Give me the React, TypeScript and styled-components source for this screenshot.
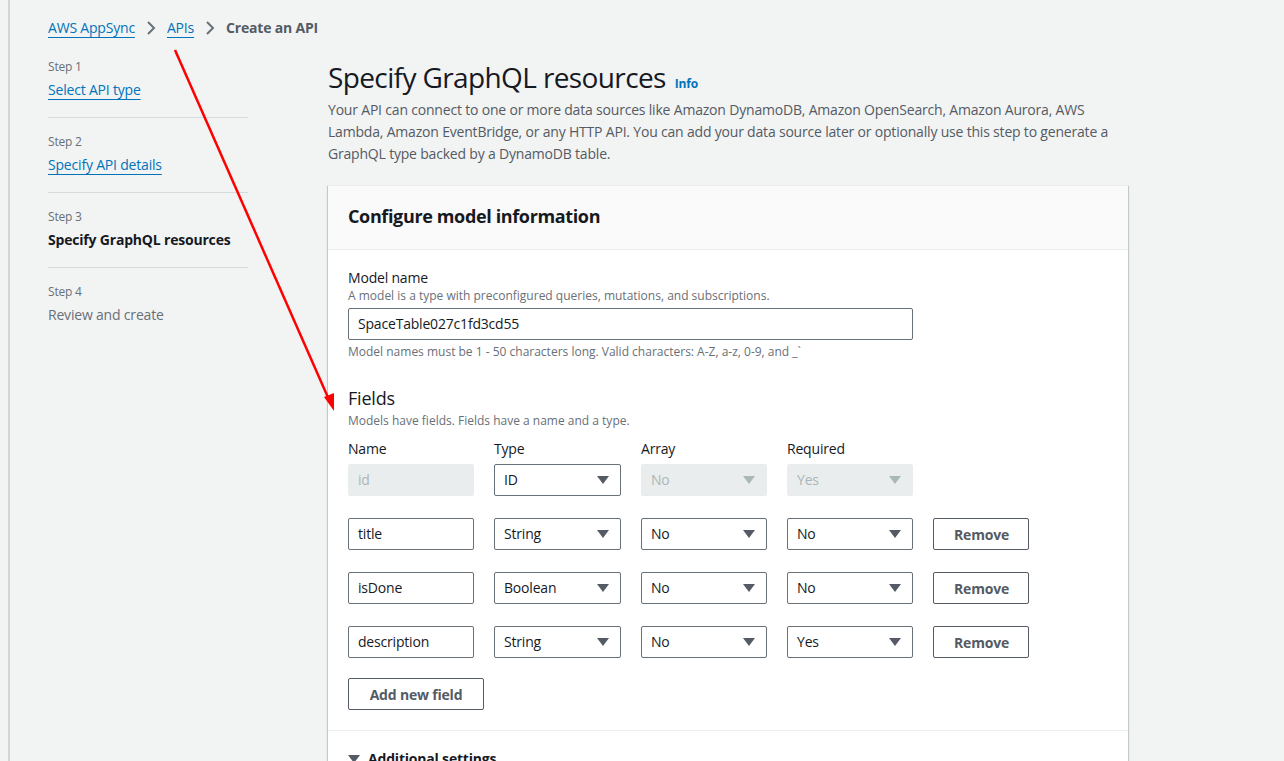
import React from "react";
import styled, { createGlobalStyle } from "styled-components";

const GlobalStyle = createGlobalStyle`
  html, body {
    margin: 0;
    padding: 0;
    background: #f2f3f3;
    font-family: "Open Sans", "Noto Sans", "Liberation Sans", sans-serif;
    letter-spacing: -0.012em;
    color: #16191f;
    overflow: hidden;
  }
  * { box-sizing: border-box; }
`;

const Frame = styled.div`
  position: relative;
  min-height: 761px;
  margin-left: 8px;
  border-left: 2px solid #d0d5d5;
  padding-left: 38px;
`;

const Breadcrumbs = styled.nav`
  display: flex;
  align-items: flex-start;
  gap: 10px;
  padding-top: 18px;
  height: 43px;
  font-size: 14px;
  line-height: 20px;
`;

const Crumb = styled.a`
  color: #0073bb;
  text-decoration: underline;
  text-underline-offset: 4px;
  text-decoration-thickness: 1px;
`;

const Current = styled.span`
  color: #545b64;
  font-weight: 700;
`;

const Chevron = () => (
  <svg width="12" height="20" viewBox="0 0 12 20" fill="none">
    <path d="M3 4 L9 10 L3 16" stroke="#687078" strokeWidth="2" />
  </svg>
);

const Layout = styled.div`
  display: grid;
  grid-template-columns: 200px 800px;
  column-gap: 80px;
`;

const SideNav = styled.ol`
  list-style: none;
  margin: 0;
  padding: 0;
`;

const Step = styled.li<{ $last?: boolean }>`
  padding: 16px 0 16px;
  border-bottom: ${(p) => (p.$last ? "none" : "1px solid #d5dbdb")};
  display: flex;
  flex-direction: column;
  gap: 4px;
`;

const StepLabel = styled.span`
  font-size: 12px;
  line-height: 16px;
  color: #687078;
`;

const StepTitle = styled.span<{ $kind: "link" | "active" | "disabled" }>`
  font-size: 14px;
  line-height: 22px;
  color: ${(p) =>
    p.$kind === "link" ? "#0073bb" : p.$kind === "active" ? "#16191f" : "#687078"};
  font-weight: ${(p) => (p.$kind === "active" ? 700 : 400)};
  text-decoration: ${(p) => (p.$kind === "link" ? "underline" : "none")};
  text-underline-offset: 4px;
  align-self: flex-start;
`;

const Main = styled.main`
  padding-top: 16px;
`;

const TitleRow = styled.div`
  display: flex;
  align-items: baseline;
  gap: 9px;
`;

const Title = styled.h1`
  margin: 0;
  font-size: 28px;
  line-height: 36px;
  font-weight: 400;
  letter-spacing: -0.022em;
  color: #16191f;
`;

const InfoLink = styled.a`
  font-size: 12px;
  font-weight: 700;
  color: #0073bb;
`;

const Description = styled.p`
  margin: 4px 0 0;
  font-size: 14px;
  line-height: 22px;
  color: #545b64;
  max-width: 790px;
`;

const Card = styled.section`
  margin-top: 20px;
  background: #ffffff;
  border-top: 1px solid #eaeded;
  box-shadow: 0 1px 1px 0 rgba(0, 28, 36, 0.3), 1px 1px 1px 0 rgba(0, 28, 36, 0.15),
    -1px 1px 1px 0 rgba(0, 28, 36, 0.15);
`;

const CardHeader = styled.header`
  background: #fafafa;
  border-bottom: 1px solid #eaeded;
  padding: 18px 20px 21px;
`;

const CardTitle = styled.h2`
  margin: 0;
  font-size: 18px;
  line-height: 24px;
  font-weight: 700;
  letter-spacing: -0.02em;
`;

const CardBody = styled.div`
  padding: 18px 20px 20px;
  border-bottom: 1px solid #eaeded;
`;

const FieldLabel = styled.div`
  font-size: 14px;
  line-height: 20px;
  color: #16191f;
`;

const Hint = styled.div`
  font-size: 12px;
  line-height: 16px;
  letter-spacing: 0;
  color: #687078;
`;

const TextInput = styled.div<{ $width?: number; $disabled?: boolean }>`
  width: ${(p) => (p.$width ? `${p.$width}px` : "100%")};
  height: 32px;
  display: flex;
  align-items: center;
  padding: 0 9px 1px;
  font-size: 14px;
  border-radius: 2px;
  border: 1px solid ${(p) => (p.$disabled ? "#eaeded" : "#687078")};
  background: ${(p) => (p.$disabled ? "#eaeded" : "#ffffff")};
  color: ${(p) => (p.$disabled ? "#aab7b8" : "#16191f")};
`;

const ModelInput = styled(TextInput)`
  margin: 4px 0 4px;
`;

const SelectBox = styled(TextInput)`
  justify-content: space-between;
  padding-right: 11px;
`;

const Caret = ({ color }: { color: string }) => (
  <svg width="12" height="8" viewBox="0 0 12 8">
    <path d="M0 0 H12 L6 8 Z" fill={color} />
  </svg>
);

const FieldsHeading = styled.h3`
  margin: 26px 0 3px;
  font-size: 18px;
  line-height: 24px;
  font-weight: 400;
`;

const FieldsGrid = styled.div`
  margin-top: 10px;
  display: grid;
  grid-template-columns: 126px 127px 126px 126px 96px;
  column-gap: 20px;
  row-gap: 22px;
  align-items: center;
`;

const ColumnHeader = styled(FieldLabel)`
  margin-bottom: -17px;
`;

const Button = styled.button`
  height: 32px;
  padding: 0 20px;
  background: #ffffff;
  border: 1px solid #545b64;
  border-radius: 2px;
  color: #545b64;
  font-family: inherit;
  letter-spacing: inherit;
  font-size: 14px;
  font-weight: 700;
  white-space: nowrap;
  cursor: pointer;
`;

const AddButton = styled(Button)`
  margin-top: 20px;
  min-width: 136px;
`;

const Additional = styled.div`
  padding: 18px 20px;
  display: flex;
  align-items: center;
  gap: 8px;
  font-size: 14px;
  line-height: 20px;
  font-weight: 700;
`;

const Overlay = styled.svg`
  position: absolute;
  left: -10px;
  top: 0;
  pointer-events: none;
`;

type Row = { name: string; type: string; array: string; required: string; locked?: boolean };

const rows: Row[] = [
  { name: "id", type: "ID", array: "No", required: "Yes", locked: true },
  { name: "title", type: "String", array: "No", required: "No" },
  { name: "isDone", type: "Boolean", array: "No", required: "No" },
  { name: "description", type: "String", array: "No", required: "Yes" },
];

const Select = ({ value, disabled }: { value: string; disabled?: boolean }) => (
  <SelectBox $disabled={disabled}>
    <span>{value}</span>
    <Caret color={disabled ? "#aab7b8" : "#545b64"} />
  </SelectBox>
);

export default function App() {
  return (
    <>
      <GlobalStyle />
      <Frame>
        <Breadcrumbs>
          <Crumb>AWS AppSync</Crumb>
          <Chevron />
          <Crumb>APIs</Crumb>
          <Chevron />
          <Current>Create an API</Current>
        </Breadcrumbs>
        <Layout>
          <SideNav>
            <Step>
              <StepLabel>Step 1</StepLabel>
              <StepTitle $kind="link">Select API type</StepTitle>
            </Step>
            <Step>
              <StepLabel>Step 2</StepLabel>
              <StepTitle $kind="link">Specify API details</StepTitle>
            </Step>
            <Step>
              <StepLabel>Step 3</StepLabel>
              <StepTitle $kind="active">Specify GraphQL resources</StepTitle>
            </Step>
            <Step $last>
              <StepLabel>Step 4</StepLabel>
              <StepTitle $kind="disabled">Review and create</StepTitle>
            </Step>
          </SideNav>
          <Main>
            <TitleRow>
              <Title>Specify GraphQL resources</Title>
              <InfoLink>Info</InfoLink>
            </TitleRow>
            <Description>
              Your API can connect to one or more data sources like Amazon DynamoDB, Amazon
              OpenSearch, Amazon Aurora, AWS Lambda, Amazon EventBridge, or any HTTP API. You can
              add your data source later or optionally use this step to generate a GraphQL type
              backed by a DynamoDB table.
            </Description>
            <Card>
              <CardHeader>
                <CardTitle>Configure model information</CardTitle>
              </CardHeader>
              <CardBody>
                <FieldLabel>Model name</FieldLabel>
                <Hint>A model is a type with preconfigured queries, mutations, and subscriptions.</Hint>
                <ModelInput $width={565}>SpaceTable027c1fd3cd55</ModelInput>
                <Hint>
                  Model names must be 1 - 50 characters long. Valid characters: A-Z, a-z, 0-9, and _`
                </Hint>
                <FieldsHeading>Fields</FieldsHeading>
                <Hint>Models have fields. Fields have a name and a type.</Hint>
                <FieldsGrid>
                  <ColumnHeader>Name</ColumnHeader>
                  <ColumnHeader>Type</ColumnHeader>
                  <ColumnHeader>Array</ColumnHeader>
                  <ColumnHeader>Required</ColumnHeader>
                  <span />
                  {rows.map((r) => (
                    <React.Fragment key={r.name}>
                      <TextInput $disabled={r.locked}>{r.name}</TextInput>
                      <Select value={r.type} />
                      <Select value={r.array} disabled={r.locked} />
                      <Select value={r.required} disabled={r.locked} />
                      {r.locked ? <span /> : <Button>Remove</Button>}
                    </React.Fragment>
                  ))}
                </FieldsGrid>
                <AddButton>Add new field</AddButton>
              </CardBody>
              <Additional>
                <Caret color="#545b64" />
                Additional settings
              </Additional>
            </Card>
          </Main>
        </Layout>
        <Overlay width="360" height="440" viewBox="0 0 360 440">
          <line x1="175" y1="50" x2="330" y2="402" stroke="#ff0000" strokeWidth="2.5" />
          <path d="M334 411 L324 397 L334 393 Z" fill="#ff0000" />
        </Overlay>
      </Frame>
    </>
  );
}
